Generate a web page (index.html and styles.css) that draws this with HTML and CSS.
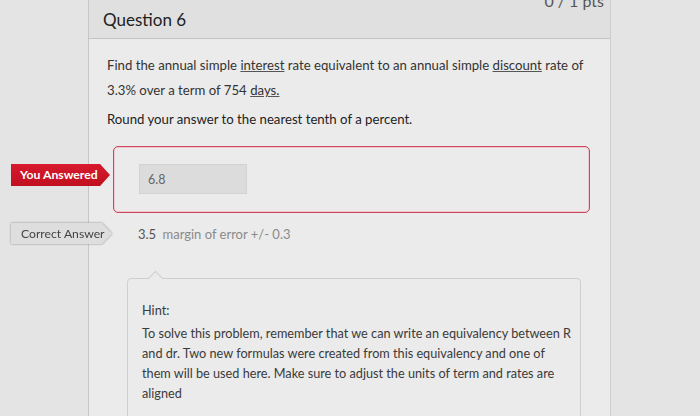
FILE: index.html
```html
<!DOCTYPE html>
<html lang="en">
<head>
  <meta charset="UTF-8">
  <meta name="viewport" content="width=device-width, initial-scale=1.0">
  <title>Question 6</title>
  <link rel="stylesheet" href="styles.css">
</head>
<body>
  <div class="question">
    <div class="question-header">
      <h2>Question 6</h2>
      <span class="points">0 / 1 pts</span>
    </div>
    <div class="question-body">
      <p class="question-text">Find the annual simple <u>interest</u> rate equivalent to an annual simple <u>discount</u> rate of 3.3% over a term of 754 <u>days.</u></p>
      <p class="question-text strong">Round your answer to the nearest tenth of a percent.</p>

      <div class="answers">
        <div class="answer-row">
          <span class="badge badge-wrong">You Answered</span>
          <div class="answer-box wrong">
            <div class="answer-input">6.8</div>
          </div>
        </div>
        <div class="answer-row correct-row">
          <span class="badge-outline"><span class="badge badge-correct">Correct Answer</span></span>
          <div class="answer-text">3.5 <span class="margin">margin of error +/- 0.3</span></div>
        </div>
      </div>

      <div class="hint">
        <p>Hint:</p>
        <p>To solve this problem, remember that we can write an equivalency between R and dr. Two new formulas were created from this equivalency and one of them will be used here. Make sure to adjust the units of term and rates are aligned</p>
      </div>
    </div>
  </div>
</body>
</html>
```

FILE: styles.css
```css
body {
  font-family: Lato, "Open Sans", sans-serif;
  margin: 0;
  padding: 0;
  background-color: #e4e4e4;
  color: #2f3437;
  overflow: hidden;
}
.question {
  margin-left: 88px;
  width: 521px;
  height: 416px;
  border-left: 1px solid #c6c6c6;
  border-right: 1px solid #cdcdcd;
  background-color: #ebebeb;
}
.question-header {
  display: flex;
  justify-content: space-between;
  align-items: flex-start;
  height: 38px;
  padding: 0 6px 0 14px;
  background-color: #e0e0e0;
  border-bottom: 1px solid #c4c4c4;
}
.question-header h2 {
  margin: 9px 0 0;
  font-size: 17px;
  font-weight: 400;
  color: #222;
}
.points {
  margin-top: -9px;
  font-size: 16px;
  color: #555;
}
.question-body {
  padding: 14px 18px 0;
}
.question-text {
  margin: 0 0 4px;
  font-size: 13.2px;
  line-height: 25px;
  color: #333;
}
.question-text.strong {
  color: #222;
}
.question-text u {
  text-decoration-color: #555;
}
.answers {
  margin-top: 14px;
  margin-left: -96px;
}
.answer-row {
  display: flex;
  align-items: flex-start;
}
.badge {
  display: block;
  width: 90px;
  height: 22px;
  line-height: 22px;
  padding-left: 9px;
  font-size: 12.2px;
  clip-path: polygon(0 0, 90% 0, 100% 50%, 90% 100%, 0 100%);
}
.badge-wrong {
  margin-top: 18px;
  background: linear-gradient(#d71a2e, #c0101f);
  color: #fff;
  font-weight: 700;
}
.answer-box {
  margin-left: 3px;
  width: 477px;
  height: 67px;
  border: 1.5px solid #c9475f;
  border-radius: 5px;
  box-shadow: inset 0 0 0 1px #f1c6ce;
  box-sizing: border-box;
  padding: 17px 0 0 25px;
}
.answer-input {
  width: 108px;
  height: 30px;
  line-height: 30px;
  padding-left: 8px;
  box-sizing: border-box;
  background-color: #dcdcdc;
  border: 1px solid #d2d2d2;
  font-size: 12.5px;
  color: #666;
}
.correct-row {
  margin-top: 10px;
  align-items: center;
}
.badge-outline {
  display: block;
  filter: drop-shadow(0 0 1px #8c8c8c);
}
.badge-correct {
  width: 91px;
  height: 21px;
  line-height: 21px;
  padding-left: 10px;
  background-color: #dedede;
  color: #444;
}
.answer-text {
  margin-left: 26px;
  font-size: 13px;
  color: #555;
  word-spacing: 3px;
}
.answer-text .margin {
  color: #8a8a8a;
  word-spacing: 0;
}
.hint {
  position: relative;
  margin: 34px 0 0 20px;
  width: 454px;
  height: 200px;
  padding: 21px 8px 0 14px;
  box-sizing: border-box;
  border: 1px solid #cfcfcf;
  border-radius: 4px;
  font-size: 12.7px;
  line-height: 20px;
  color: #3a3a3a;
}
.hint::before {
  content: "";
  position: absolute;
  top: -6px;
  left: 22px;
  width: 10px;
  height: 10px;
  background-color: #ebebeb;
  border-left: 1px solid #cfcfcf;
  border-top: 1px solid #cfcfcf;
  transform: rotate(45deg);
}
.hint p {
  margin: 0 0 3px;
}
```
